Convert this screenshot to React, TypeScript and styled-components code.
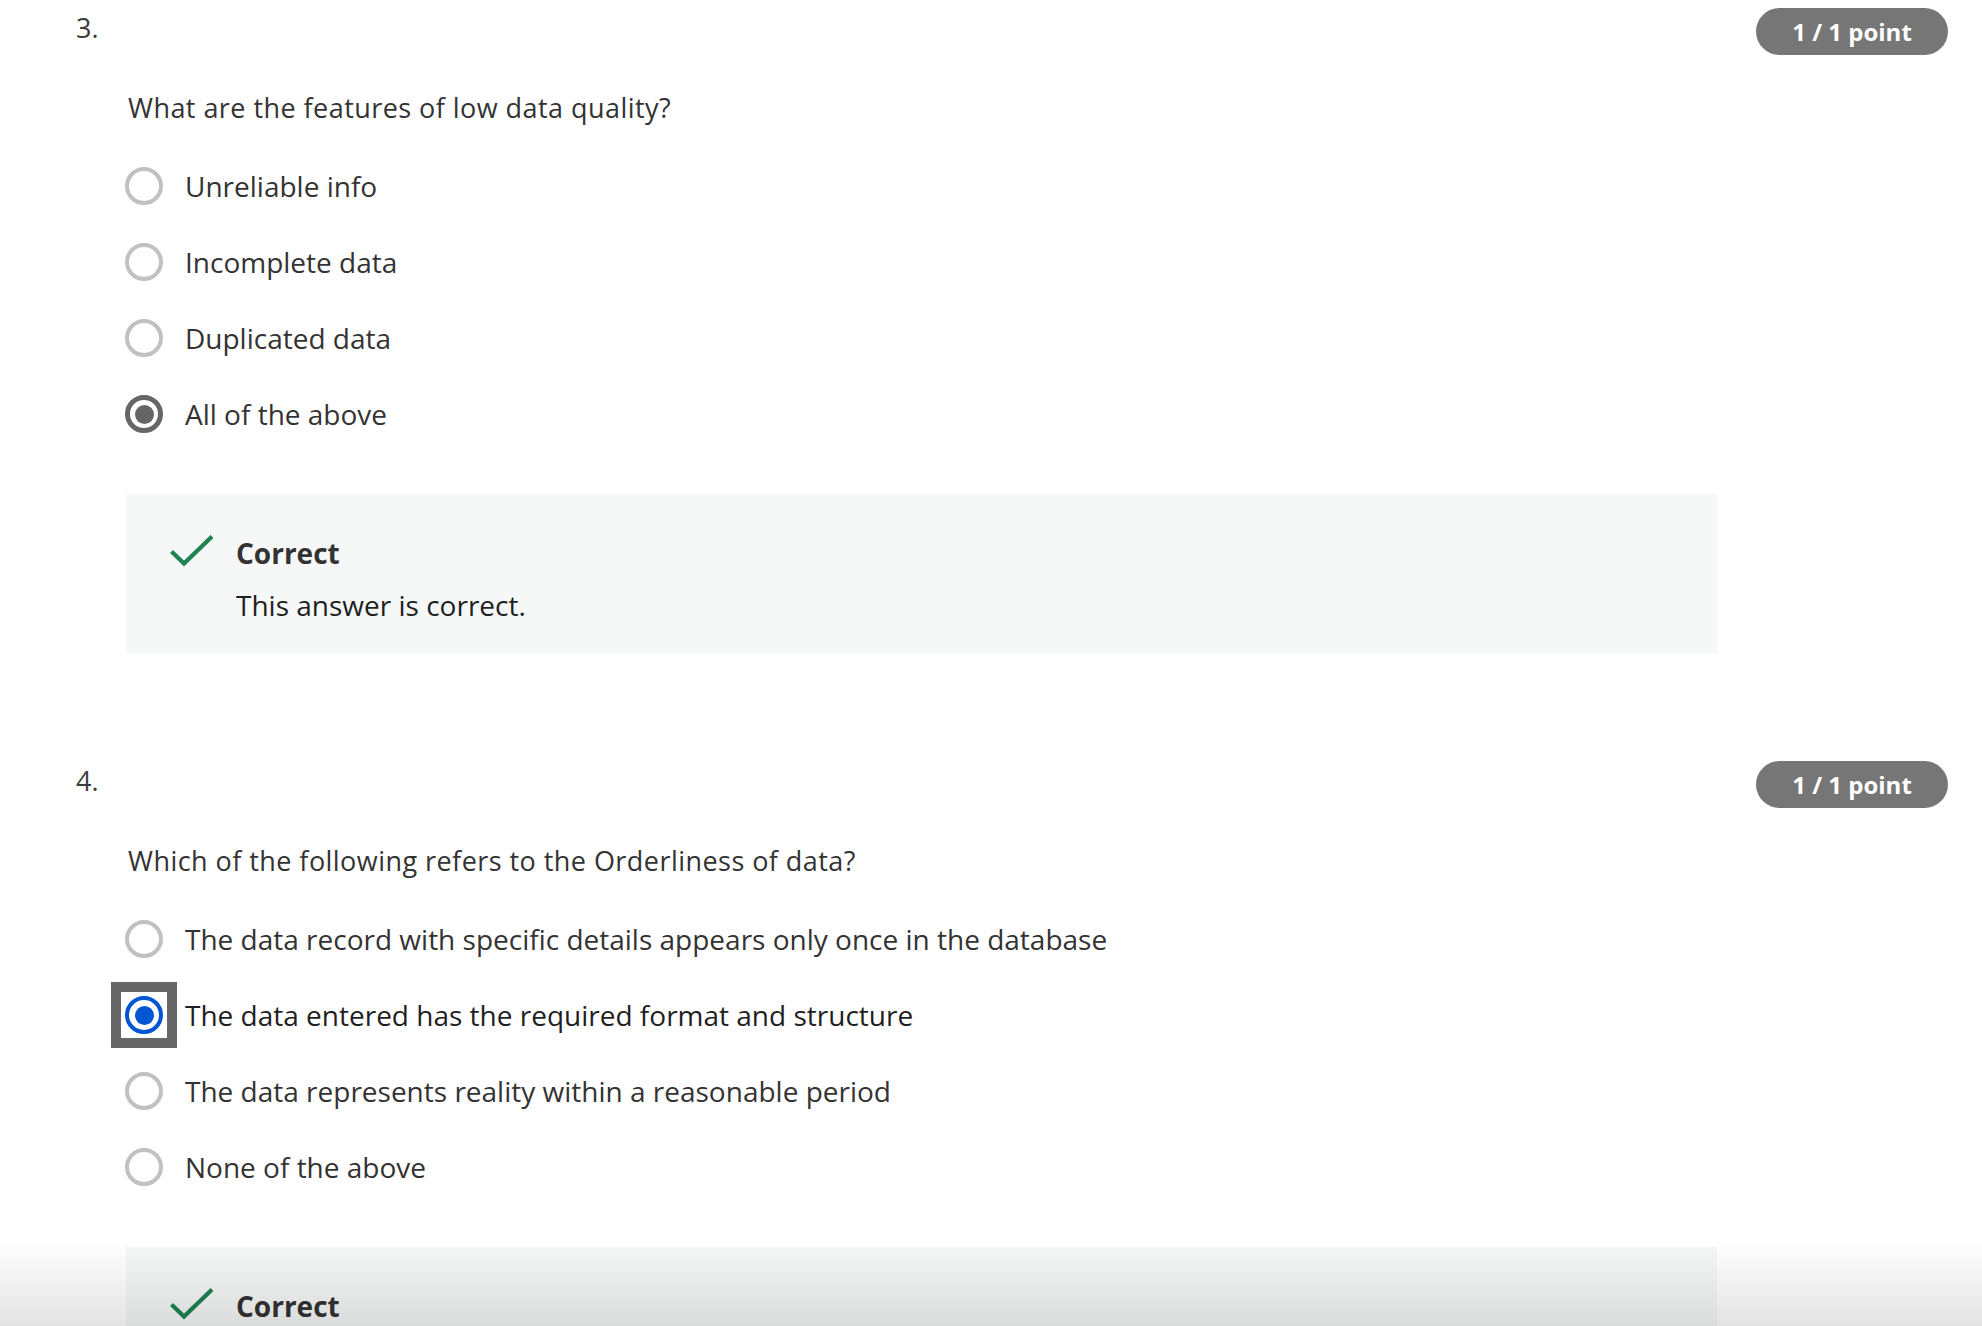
import React from 'react'
import styled, { createGlobalStyle } from 'styled-components'

const GlobalStyle = createGlobalStyle`
  html, body {
    margin: 0;
    padding: 0;
    background: #fff;
    font-family: "Open Sans", "Liberation Sans", sans-serif;
    color: #333;
  }
`

const Page = styled.div`
  padding: 0 34px 0 76px;
`

const QuestionBlock = styled.section`
  padding-top: 8px;
  padding-bottom: 100px;
`

const Header = styled.div`
  display: flex;
  justify-content: space-between;
  align-items: flex-start;
`

const Number = styled.div`
  font-size: 27px;
  line-height: 40px;
  color: #3c3c3c;
`

const Badge = styled.div`
  width: 192px;
  height: 47px;
  border-radius: 24px;
  background: #767676;
  color: #fff;
  font-weight: 700;
  font-size: 24px;
  display: flex;
  align-items: center;
  justify-content: center;
`

const Body = styled.div`
  width: 1591px;
  margin-left: 50px;
`

const Prompt = styled.p`
  margin: 35px 0 0 2px;
  font-size: 27px;
  letter-spacing: 0.45px;
  line-height: 36px;
  color: #333;
`

const Options = styled.div`
  margin-top: 36px;
  display: flex;
  flex-direction: column;
  gap: 28px;
`

const OptionRow = styled.div`
  height: 48px;
  display: flex;
  align-items: center;
`

const RadioSlot = styled.span<{ $focused?: boolean }>`
  width: 38px;
  height: 38px;
  margin-left: -1px;
  flex-shrink: 0;
  display: flex;
  outline: ${(p) => (p.$focused ? '10px solid #666' : 'none')};
  outline-offset: 4px;
`

type RadioProps = { $state: 'idle' | 'chosen' | 'focused' }

const Radio = styled.span<RadioProps>`
  box-sizing: border-box;
  width: 38px;
  height: 38px;
  border-radius: 50%;
  display: flex;
  align-items: center;
  justify-content: center;
  background: #fff;
  border: ${(p) =>
    p.$state === 'idle' ? '4px solid #c1c1c1' : p.$state === 'chosen' ? '5px solid #666' : '4px solid #0056d2'};
  &::after {
    content: '';
    display: ${(p) => (p.$state === 'idle' ? 'none' : 'block')};
    width: 19px;
    height: 19px;
    border-radius: 50%;
    background: ${(p) => (p.$state === 'focused' ? '#0056d2' : '#666')};
  }
`

const OptionText = styled.span<{ $dark?: boolean }>`
  margin-left: 22px;
  font-size: 28px;
  line-height: 36px;
  color: ${(p) => (p.$dark ? '#1f1f1f' : '#333')};
`

const Feedback = styled.div`
  margin-top: 56px;
  background: #f5f8f7;
  padding: 41px 0 30px 44px;
  display: flex;
`

const CheckCol = styled.div`
  width: 66px;
  flex-shrink: 0;
`

const FeedbackText = styled.div`
  display: flex;
  flex-direction: column;
  gap: 16px;
`

const FeedbackTitle = styled.div`
  font-weight: 700;
  font-size: 28px;
  line-height: 36px;
  color: #333;
`

const FeedbackNote = styled.div`
  font-size: 28px;
  line-height: 36px;
  color: #1f1f1f;
`

const BottomFade = styled.div`
  position: fixed;
  left: 0;
  right: 0;
  bottom: 0;
  height: 84px;
  pointer-events: none;
  background: linear-gradient(to bottom, rgba(0, 0, 0, 0), rgba(0, 0, 0, 0.11));
`

const Check = () => (
  <svg width="44" height="34" viewBox="0 0 44 34">
    <polyline points="1.5,16.5 14,28.5 42,1.5" fill="none" stroke="#1f8354" strokeWidth="4.2" />
  </svg>
)

type Q = {
  num: string
  prompt: string
  options: string[]
  picked: number
  focused?: boolean
}

const questions: Q[] = [
  {
    num: '3.',
    prompt: 'What are the features of low data quality?',
    options: ['Unreliable info', 'Incomplete data', 'Duplicated data', 'All of the above'],
    picked: 3,
  },
  {
    num: '4.',
    prompt: 'Which of the following refers to the Orderliness of data?',
    options: [
      'The data record with specific details appears only once in the database',
      'The data entered has the required format and structure',
      'The data represents reality within a reasonable period',
      'None of the above',
    ],
    picked: 1,
    focused: true,
  },
]

const App = () => {
  return (
    <>
      <GlobalStyle />
      <Page>
        {questions.map((q) => (
          <QuestionBlock key={q.num}>
            <Header>
              <Number>{q.num}</Number>
              <Badge>1 / 1 point</Badge>
            </Header>
            <Body>
              <Prompt>{q.prompt}</Prompt>
              <Options>
                {q.options.map((o, i) => {
                  const state = i !== q.picked ? 'idle' : q.focused ? 'focused' : 'chosen'
                  return (
                    <OptionRow key={o}>
                      <RadioSlot $focused={state === 'focused'}>
                        <Radio $state={state} />
                      </RadioSlot>
                      <OptionText $dark={state === 'focused'}>{o}</OptionText>
                    </OptionRow>
                  )
                })}
              </Options>
              <Feedback>
                <CheckCol>
                  <Check />
                </CheckCol>
                <FeedbackText>
                  <FeedbackTitle>Correct</FeedbackTitle>
                  <FeedbackNote>This answer is correct.</FeedbackNote>
                </FeedbackText>
              </Feedback>
            </Body>
          </QuestionBlock>
        ))}
      </Page>
      <BottomFade />
    </>
  )
}

export default App
